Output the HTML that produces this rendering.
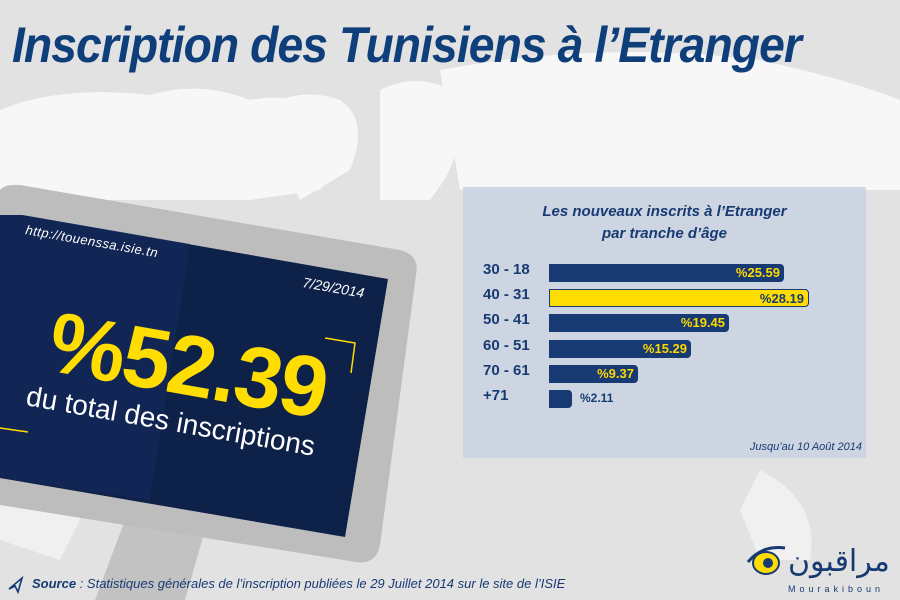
<!DOCTYPE html>
<html><head><meta charset="utf-8"><style>
body{margin:0;width:900px;height:600px;overflow:hidden;background:#e2e2e2;font-family:"Liberation Sans",sans-serif;position:relative}
.t{position:absolute;left:12px;top:16px;font-size:50px;font-weight:bold;font-style:italic;color:#0f3f7a;letter-spacing:-1px;white-space:nowrap;transform:scaleX(0.925);transform-origin:0 0}
.panel{position:absolute;left:463px;top:187px;width:403px;height:271px;background:rgba(200,210,224,0.85)}
.ph{position:absolute;left:0;width:403px;top:14px;text-align:center;font-weight:bold;font-style:italic;font-size:15px;line-height:22px;color:#173a73}
.lab{position:absolute;left:20px;font-weight:bold;font-size:15px;color:#173a73}
.bar{position:absolute;left:86px;height:18px;background:#173a73;border-radius:0 4px 4px 0;color:#ffd800;font-weight:bold;font-size:13px;text-align:right;line-height:18px;box-sizing:border-box;padding-right:4px}
.y{background:#ffdd00;color:#173a73;border:1px solid #173a73}
.src{position:absolute;left:32px;top:576px;font-size:13px;font-style:italic;color:#173a73;white-space:nowrap}
</style></head><body>
<svg width="900" height="600" style="position:absolute;left:0;top:0">
<g fill="#f7f7f7">
<path d="M0 110 Q60 85 150 95 Q200 80 250 100 Q300 90 330 120 Q350 150 320 190 L250 200 L0 200Z"/>
<path d="M260 110 Q300 85 340 100 Q370 120 350 170 L300 200 Z"/>
<path d="M380 90 Q420 70 460 95 Q470 150 430 200 L380 200Z"/>
<path d="M440 70 Q600 40 760 60 Q850 80 900 100 L900 190 L460 190Z"/>
<path d="M30 420 Q70 440 80 520 L60 560 L0 540 L0 430Z" fill="#f0f0f0"/>
<path d="M760 470 Q820 500 810 560 L760 560 L740 510Z" fill="#f0f0f0"/>
</g>
<polygon points="95,600 125,520 205,530 185,600" fill="#c2c2c2"/>
<path d="M20 185 L400 250 Q420 255 416 275 L380 545 Q376 565 356 562 L0 505 L0 190 Q5 184 20 185Z" fill="#bdbdbd"/>
<polygon points="22,215 388,279 345,537 0,478 0,215" fill="#0e2148"/>
<polygon points="22,215 190,244 150,500 0,478 0,215" fill="#13295a" opacity="0.7"/>
<polyline points="325,338 355,343 351,373" fill="none" stroke="#ffdd00" stroke-width="1.5"/>
<polyline points="0,428 28,432" fill="none" stroke="#ffdd00" stroke-width="1.5"/>
<g transform="translate(25,234) rotate(10)"><text font-family="Liberation Sans,sans-serif" font-style="italic" font-size="13" fill="#fff" letter-spacing="0.5">http://touenssa.isie.tn</text></g>
<g transform="translate(302,287) rotate(10)"><text font-size="14" fill="#fff" font-style="italic">7/29/2014</text></g>
<g transform="translate(45,370) rotate(10)"><text font-size="86" font-weight="bold" fill="#ffdd00" letter-spacing="-2">%52.39</text></g>
<g transform="translate(25,405) rotate(10)"><text font-size="28" fill="#fff">du total des inscriptions</text></g>
<path d="M9 589 L22 578 L18 592 L15 586Z" fill="none" stroke="#173a73" stroke-width="1.6"/>
<ellipse cx="766" cy="563" rx="13" ry="11" fill="#ffdd00" stroke="#173a73" stroke-width="2"/>
<circle cx="768" cy="563" r="5" fill="#173a73"/>
<path d="M748 562 Q762 545 785 548" fill="none" stroke="#173a73" stroke-width="3"/>
</svg>
<div class="t">Inscription des Tunisiens à l’Etranger</div>
<div class="panel">
<div class="ph">Les nouveaux inscrits à l’Etranger<br>par tranche d’âge</div>
<div class="lab" style="top:74px">30 - 18</div><div class="bar" style="top:77px;width:235px">%25.59</div>
<div class="lab" style="top:99px">40 - 31</div><div class="bar y" style="top:102px;width:260px">%28.19</div>
<div class="lab" style="top:124px">50 - 41</div><div class="bar" style="top:127px;width:180px">%19.45</div>
<div class="lab" style="top:150px">60 - 51</div><div class="bar" style="top:153px;width:142px">%15.29</div>
<div class="lab" style="top:175px">70 - 61</div><div class="bar" style="top:178px;width:89px">%9.37</div>
<div class="lab" style="top:200px">+71</div><div class="bar" style="top:203px;width:23px"></div>
<div style="position:absolute;left:117px;top:204px;font-size:12px;font-weight:bold;color:#173a73">%2.11</div>
<div style="position:absolute;right:4px;top:254px;font-size:11px;font-style:italic;color:#173a73">Jusqu’au 10 Août 2014</div>
</div>
<div class="src"><b>Source</b> : Statistiques générales de l’inscription publiées le 29 Juillet 2014 sur le site de l’ISIE</div>
<div style="position:absolute;left:788px;top:544px;font-size:30px;color:#173a73;font-family:'DejaVu Sans',sans-serif">مراقبون</div>
<div style="position:absolute;left:788px;top:584px;font-size:9px;letter-spacing:4px;color:#173a73">Mourakiboun</div>
</body></html>
